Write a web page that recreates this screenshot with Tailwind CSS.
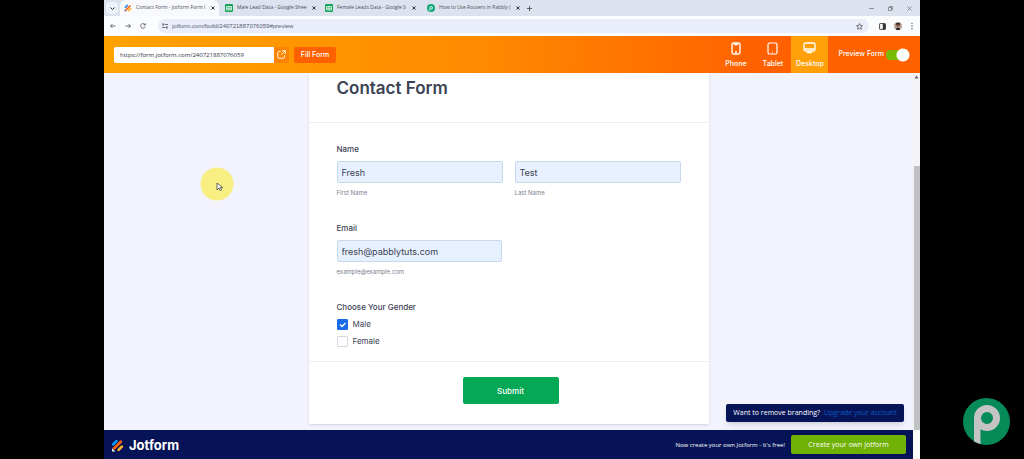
<!DOCTYPE html>
<html lang="en">
<head>
<meta charset="utf-8">
<meta name="viewport" content="width=device-width, initial-scale=1">
<title>Contact Form - Jotform Form Builder</title>
<script src="https://cdn.jsdelivr.net/npm/@tailwindcss/browser@4"></script>
</head>
<body class="bg-black font-['Inter','Liberation_Sans',sans-serif]">
<div class="relative flex min-h-screen flex-col px-[104px]">

  <!-- Browser tabs -->
  <div class="flex h-4 items-center bg-[#dce2ee] font-['Open_Sans',sans-serif] text-[5px] text-[#4b5058]">
    <div class="flex h-full w-4 items-center justify-center">
      <button aria-label="Search tabs" class="flex size-3 items-center justify-center rounded-sm bg-[#eef1f8]">
        <svg class="size-[5px]" viewBox="0 0 10 10" fill="none" stroke="#333" stroke-width="2"><path d="M1 3l4 4 4-4"/></svg>
      </button>
    </div>
    <div class="flex h-full w-[99px] items-center gap-1 rounded-t-md bg-[#f8f9fd] pr-1 pl-1">
      <svg class="size-2 shrink-0" viewBox="0 0 24 24" fill="none" stroke-width="5" stroke-linecap="round"><path d="M4 10l6-6" stroke="#2f8fe8"/><path d="M6 18L18 6" stroke="#ff6100"/><path d="M14 20l6-6" stroke="#ffb629"/><path d="M2 22h5l-5-5z" fill="#0a1551"/></svg>
      <span class="w-[73px] whitespace-nowrap">Contact Form - Jotform Form I</span>
      <button aria-label="Close tab"><svg class="size-1" viewBox="0 0 8 8" stroke="#333" stroke-width="2"><path d="M1 1l6 6M7 1L1 7"/></svg></button>
    </div>
    <div class="flex h-full w-[102px] items-center gap-1 pl-1.5">
      <svg class="size-2 shrink-0" viewBox="0 0 16 16"><rect width="16" height="16" rx="2" fill="#16a558"/><path d="M3 5h10v7H3zM3 8.500h10M8 5v7" fill="none" stroke="#fff" stroke-width="1.500"/></svg>
      <span class="w-[71px] whitespace-nowrap">Male Lead Data - Google Shee</span>
      <button aria-label="Close tab"><svg class="size-1" viewBox="0 0 8 8" stroke="#333" stroke-width="2"><path d="M1 1l6 6M7 1L1 7"/></svg></button>
    </div>
    <div class="flex h-full w-[102px] items-center gap-1 pl-1">
      <svg class="size-2 shrink-0" viewBox="0 0 16 16"><rect width="16" height="16" rx="2" fill="#16a558"/><path d="M3 5h10v7H3zM3 8.500h10M8 5v7" fill="none" stroke="#fff" stroke-width="1.500"/></svg>
      <span class="w-[71px] whitespace-nowrap">Female Leads Data - Google S</span>
      <button aria-label="Close tab"><svg class="size-1" viewBox="0 0 8 8" stroke="#333" stroke-width="2"><path d="M1 1l6 6M7 1L1 7"/></svg></button>
    </div>
    <div class="flex h-full w-[100px] items-center gap-1 pl-1">
      <svg class="size-2 shrink-0" viewBox="0 0 16 16"><circle cx="8" cy="8" r="8" fill="#12a67a"/><path d="M6 13V7.500A2.500 2.500 0 1 1 8.500 10" fill="none" stroke="#fff" stroke-width="2"/></svg>
      <span class="w-[73px] whitespace-nowrap">How to Use Routers in Pabbly (</span>
      <button aria-label="Close tab"><svg class="size-1" viewBox="0 0 8 8" stroke="#333" stroke-width="2"><path d="M1 1l6 6M7 1L1 7"/></svg></button>
    </div>
    <button aria-label="New tab" class="ml-1"><svg class="size-[5px]" viewBox="0 0 8 8" stroke="#555" stroke-width="1.500"><path d="M4 0v8M0 4h8"/></svg></button>
    <div class="ml-auto flex items-center gap-[14px] pr-2">
      <button aria-label="Minimize"><svg class="size-[5px]" viewBox="0 0 10 10" stroke="#777" stroke-width="1.500"><path d="M0 5h10"/></svg></button>
      <button aria-label="Restore"><svg class="size-[5px]" viewBox="0 0 10 10" fill="none" stroke="#777" stroke-width="1.500"><path d="M1 3h6v6H1zM3 3V1h6v6H7"/></svg></button>
      <button aria-label="Close"><svg class="size-[5px]" viewBox="0 0 10 10" stroke="#777" stroke-width="1.500"><path d="M1 1l8 8M9 1L1 9"/></svg></button>
    </div>
  </div>

  <!-- Address bar -->
  <div class="flex h-5 items-center bg-[#fbfcfe] pr-1.5 pl-1.5">
    <div class="flex w-12 items-center gap-[9px]">
      <button aria-label="Back"><svg class="size-1.5" viewBox="0 0 12 12" fill="none" stroke="#444" stroke-width="1.500"><path d="M11 6H1M5 2L1 6l4 4"/></svg></button>
      <button aria-label="Forward"><svg class="size-1.5" viewBox="0 0 12 12" fill="none" stroke="#444" stroke-width="1.500"><path d="M1 6h10M7 2l4 4-4 4"/></svg></button>
      <button aria-label="Reload"><svg class="size-1.5" viewBox="0 0 12 12" fill="none" stroke="#444" stroke-width="1.500"><path d="M10.500 7A4.700 4.700 0 1 1 10 3.500M10.500 0.500V4H7"/></svg></button>
    </div>
    <div class="flex h-3.5 flex-1 items-center gap-1 rounded-full bg-[#e9eefa] pr-1.5 pl-1">
      <svg class="size-1.5 shrink-0" viewBox="0 0 12 12" fill="none" stroke="#444" stroke-width="1.500"><circle cx="2.500" cy="3" r="1.700"/><path d="M6 3h6M0 9h6"/><circle cx="9.500" cy="9" r="1.700"/></svg>
      <input aria-label="Address" value="jotform.com/build/240721887076059#preview" class="min-w-0 flex-1 bg-transparent font-['Liberation_Sans',sans-serif] text-[6px] text-[#5a6070] outline-none">
      <button aria-label="Bookmark"><svg class="size-[7px]" viewBox="0 0 12 12" fill="none" stroke="#444" stroke-width="1.200"><path d="M6 1l1.500 3.300 3.600.4-2.700 2.400.8 3.600L6 8.900l-3.200 1.800.8-3.600L.9 4.700l3.600-.4z"/></svg></button>
    </div>
    <div class="ml-2.5 flex items-center gap-2">
      <button aria-label="Side panel"><svg class="size-[7px]" viewBox="0 0 12 12"><rect x="1" y="1" width="10" height="10" rx="1" fill="none" stroke="#333" stroke-width="1.500"/><path d="M6.500 1H11v10H6.500z" fill="#333"/></svg></button>
      <button aria-label="Profile"><svg class="size-2" viewBox="0 0 12 12"><circle cx="6" cy="6" r="6" fill="#b9a79b"/><circle cx="6" cy="4.500" r="2.800" fill="#8a5641"/><path d="M2.500 4.500C2.500 0 9.500 0 9.500 4.500 8 3 4 3 2.500 4.500zM3 12c0-5 6-5 6 0z" fill="#222"/></svg></button>
      <button aria-label="Menu"><svg class="h-2 w-1" viewBox="0 0 4 12" fill="#444"><circle cx="2" cy="2" r="1"/><circle cx="2" cy="6" r="1"/><circle cx="2" cy="10" r="1"/></svg></button>
    </div>
  </div>

  <!-- Preview bar -->
  <header class="flex h-[37px] items-center bg-linear-to-r from-[#ffa200] via-[#ff8b00] via-45% to-[#ff6100] to-80% pl-2.5 text-[7px] text-white">
    <input aria-label="Form link" value="https://form.jotform.com/240721887076059" class="h-4 w-[160px] rounded-l-xs bg-white px-1.5 font-['Open_Sans',sans-serif] text-[6px] text-[#2c3345] outline-none">
    <button aria-label="Open in new tab" class="flex h-4 w-[15px] items-center justify-center rounded-r-xs bg-[#ff8500]">
      <svg class="size-[9px]" viewBox="0 0 12 12" fill="none" stroke="#fff" stroke-width="1.200"><path d="M5 2H2.500A1.500 1.500 0 0 0 1 3.500v6A1.500 1.500 0 0 0 2.500 11h6A1.500 1.500 0 0 0 10 9.500V7M7 1h4v4M11 1L5.500 6.500"/></svg>
    </button>
    <button class="ml-[5px] flex h-4 w-[42px] items-center justify-center rounded-xs bg-[#ff6100] pt-px font-medium">Fill Form</button>
    <nav class="ml-auto flex h-full font-medium">
      <button class="flex w-[37px] flex-col items-center justify-center gap-1 pt-0.5">
        <svg class="h-[13px] w-[10px]" viewBox="0 0 10 13" fill="none" stroke="#fff" stroke-width="1.300"><rect x="1" y="1" width="8" height="11" rx="1.500"/><path d="M3.500 1.500v1h3v-1M4 10h2"/></svg>Phone
      </button>
      <button class="flex w-[37px] flex-col items-center justify-center gap-1 pt-0.5">
        <svg class="h-[13px] w-[11px]" viewBox="0 0 11 13" fill="none" stroke="#fff" stroke-width="1.200"><rect x="1" y="1" width="9" height="11" rx="1.500"/><path d="M5 10h1"/></svg>Tablet
      </button>
      <button class="flex w-[37px] flex-col items-center justify-center gap-1 bg-[#ffa00a] pt-0.5">
        <svg class="h-[13px] w-[13px]" viewBox="0 0 13 13" fill="none" stroke="#fff" stroke-width="1.300"><rect x="1" y="1" width="11" height="8" rx="1.500"/><path d="M1.500 7h10M4 10.500h5"/></svg>Desktop
      </button>
    </nav>
    <label class="flex items-center gap-0.5 pr-2.5 pl-2.5 font-medium">Preview Form
      <input type="checkbox" checked class="h-3.5 w-6 appearance-none rounded-full bg-[radial-gradient(circle_at_17px_7px,#fff_6px,transparent_7px),linear-gradient(#78bb07,#78bb07)] bg-[length:24px_14px,20px_10px] bg-[position:0_0,0_2px] bg-no-repeat">
    </label>
  </header>

  <!-- Form -->
  <div class="relative flex flex-1 bg-[#f3f3fe]">
    <main class="flex-1 pb-[5px]">
      <form class="mx-auto w-full max-w-[400px] bg-white pb-5 text-[8px] text-[#3c4254] shadow-sm">
        <h1 class="h-[50px] border-b border-[#eeeef3] px-7 pt-[3px] text-[17px] leading-6 font-semibold">Contact Form</h1>
        <div class="px-7">
          <fieldset class="mt-5">
            <legend class="mb-[5px] leading-[13px] font-medium">Name</legend>
            <div class="grid grid-cols-2 gap-3">
              <div>
                <input id="first" value="Fresh" class="block h-[22px] w-full rounded-xs border border-[#c9d8ea] bg-[#e6f0fe] px-1 text-[9px] outline-none">
                <label for="first" class="mt-1 block text-[6px] leading-3 text-[#7b8090]">First Name</label>
              </div>
              <div>
                <input id="last" value="Test" class="block h-[22px] w-full rounded-xs border border-[#c9d8ea] bg-[#e6f0fe] px-1 text-[9px] outline-none">
                <label for="last" class="mt-1 block text-[6px] leading-3 text-[#7b8090]">Last Name</label>
              </div>
            </div>
          </fieldset>
          <div class="mt-[23px]">
            <label for="email" class="mb-[5px] block leading-[13px] font-medium">Email</label>
            <input id="email" type="email" value="fresh@pabblytuts.com" class="block h-[22px] w-[165px] rounded-xs border border-[#c9d8ea] bg-[#e6f0fe] px-1 text-[9px] outline-none">
            <p class="mt-1 text-[6px] leading-3 text-[#7b8090]">example@example.com</p>
          </div>
          <fieldset class="mt-[23px]">
            <legend class="mb-[5px] leading-[13px] font-medium">Choose Your Gender</legend>
            <label class="mb-1.5 flex items-center gap-[5px] leading-[11px]">
              <span class="grid">
                <input type="checkbox" checked class="peer col-start-1 row-start-1 size-[11px] appearance-none rounded-[1px] border border-[#d5d7e0] checked:border-[#1a6be8] checked:bg-[#1a6be8]">
                <svg class="pointer-events-none col-start-1 row-start-1 hidden size-[11px] peer-checked:block" viewBox="0 0 11 11" fill="none" stroke="#fff" stroke-width="1.300"><path d="M3 5.500l2 2 3.500-3.500"/></svg>
              </span>Male
            </label>
            <label class="flex items-center gap-[5px] leading-[11px]">
              <input type="checkbox" class="size-[11px] appearance-none rounded-[1px] border border-[#d5d7e0]">Female
            </label>
          </fieldset>
        </div>
        <div class="mt-3.5 flex justify-center border-t border-[#eeeef3] pt-[15px] pl-1">
          <button type="button" class="h-[27px] w-24 rounded-xs bg-[#05a854] text-[8px] font-medium text-white">Submit</button>
        </div>
      </form>
    </main>
    <!-- Page scrollbar -->
    <div class="flex w-[7px] flex-col items-center bg-[#f3f3f5]">
      <svg class="mt-0.5 h-1 w-[5px]" viewBox="0 0 10 8" fill="#666"><path d="M5 1l4 6H1z"/></svg>
      <div class="mt-[87px] w-1.5 flex-1 bg-[#bfc1c2]"></div>
    </div>
    <!-- Cursor with click highlight -->
    <svg class="pointer-events-none absolute top-[94px] left-[96px] size-[34px]" viewBox="0 0 34 34"><circle cx="17" cy="17" r="16.500" fill="#f9ee82"/><path d="M17 16v7l2-2 1.200 2.600 1.300-.6-1.200-2.400h2.300z" fill="#fff" stroke="#555" stroke-width=".9"/></svg>
    <!-- Branding notice -->
    <p class="absolute right-4 bottom-2 flex h-[18px] w-[178px] items-center justify-center gap-1 rounded-xs bg-[#061457] font-['Open_Sans',sans-serif] text-[7px] whitespace-nowrap text-white shadow-md"><span class="font-medium">Want to remove branding?</span><a href="#" class="text-[#0b5bc0]">Upgrade your account</a></p>
  </div>

  <!-- Footer -->
  <footer class="flex h-[29px] bg-[#fafafa] pr-[7px]">
    <div class="flex flex-1 items-center bg-[#061457] pr-[7px] pl-[7px] text-white">
      <a href="#" class="flex items-center gap-[5px] pt-0.5 text-[13px] font-bold">
        <svg class="size-[13px]" viewBox="0 0 24 24" fill="none" stroke-width="5" stroke-linecap="round"><path d="M4 10l6-6" stroke="#0099ff"/><path d="M6 17L18 5" stroke="#ff6100"/><path d="M14 20l6-6" stroke="#ffb629"/><path d="M2 23h6l-6-6z" fill="#fff"/></svg>Jotform
      </a>
      <span class="mr-1.5 ml-auto pt-0.5 font-['Open_Sans',sans-serif] text-[6px]">Now create your own Jotform - It's free!</span>
      <a href="#" class="flex h-[19px] w-[115px] items-center justify-center rounded-xs bg-[#6fb104] pt-0.5 font-['Open_Sans',sans-serif] text-[7px]">Create your own Jotform</a>
    </div>
  </footer>

  <!-- Channel watermark -->
  <svg class="absolute right-3.5 bottom-3.5 size-[47px]" viewBox="0 0 47 47"><circle cx="23.500" cy="23.500" r="23.500" fill="#068a57"/><path d="M11 20h6.500v26.200L11 43.500z" fill="#c4c4c4"/><circle cx="24" cy="20" r="9.500" fill="none" stroke="#c4c4c4" stroke-width="7"/></svg>
</div>
</body>
</html>
